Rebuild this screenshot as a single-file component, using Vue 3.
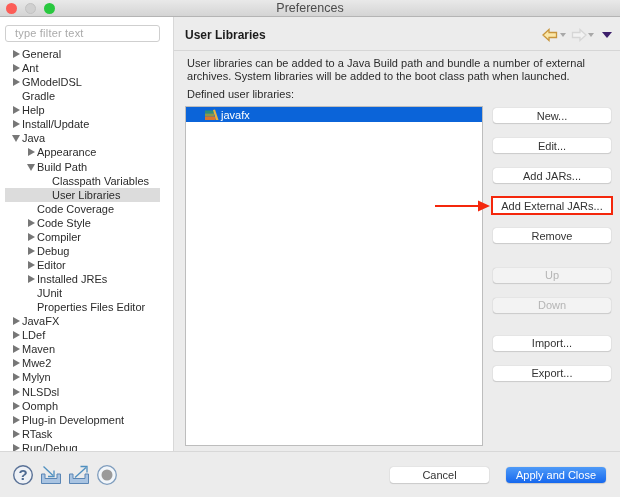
<template>
  <div class="window">
    <div class="titlebar">
      <span class="light red"></span>
      <span class="light grey"></span>
      <span class="light green"></span>
      <span class="title">Preferences</span>
    </div>

    <div class="body">
      <aside class="sidebar">
        <div class="filter">type filter text</div>
        <div class="tree">
          <div
            v-for="node in tree"
            :key="node.label"
            class="node"
            :class="['depth-' + node.depth, { current: node.current }]"
          >
            <span class="twist" :class="node.arrow"></span>
            <span>{{ node.label }}</span>
          </div>
        </div>
      </aside>

      <main class="panel">
        <header class="panel-head">
          <h1>User Libraries</h1>
          <div class="nav">
            <svg width="16" height="14" viewBox="0 0 16 14">
              <path d="M1 7 7 1.500V4.500h7.500v5H7v3z" fill="#fbe7a8" stroke="#c8953c" stroke-width="1.300" />
            </svg>
            <span class="mini"></span>
            <svg class="fwd" width="16" height="14" viewBox="0 0 16 14">
              <path d="M15 7 9 1.500V4.500H1.500v5H9v3z" fill="#f2f2f2" stroke="#d6d6d6" stroke-width="1.300" />
            </svg>
            <span class="mini second"></span>
            <span class="menu"></span>
          </div>
        </header>

        <div class="content">
          <p class="intro">User libraries can be added to a Java Build path and bundle a number of external archives. System libraries will be added to the boot class path when launched.</p>
          <p class="defined">Defined user libraries:</p>
          <div class="columns">
            <div class="list">
              <div class="lib">
                <svg width="16" height="12" viewBox="0 0 16 12">
                  <rect x="1" y="1.500" width="9" height="3" fill="#2f8f78" />
                  <rect x="1" y="4.500" width="9" height="3" fill="#8a9a4a" />
                  <rect x="1" y="7.500" width="10.500" height="3.500" fill="#d9772e" />
                  <path d="M9 1 11 .5 14.500 11H12z" fill="#e9b23c" />
                </svg>
                <span>javafx</span>
              </div>
            </div>
            <div class="buttons">
              <button v-for="b in buttons" :key="b.label" class="btn" :class="b.cls" :disabled="b.off">
                {{ b.label }}
              </button>
              <div class="callout">
                <svg width="56" height="14" viewBox="0 0 56 14">
                  <path d="M0 7h44" stroke="#f4270c" stroke-width="1.800" />
                  <path d="M43 1.500 55 7 43 12.500z" fill="#f4270c" />
                </svg>
              </div>
            </div>
          </div>
        </div>
      </main>
    </div>

    <footer class="footer">
      <div class="tools">
        <svg width="22" height="22" viewBox="0 0 22 22">
          <circle cx="11" cy="11" r="9.300" fill="#eef1f6" stroke="#5a7297" stroke-width="1.400" />
          <text x="11" y="16" text-anchor="middle" class="q">?</text>
        </svg>
        <svg width="22" height="20" viewBox="0 0 22 20">
          <path d="M1.500 9h3.500v4.500h12V9h3.500v9.500h-19z" fill="#a9c4e2" stroke="#5b86b5" />
          <path d="M3.500 1.500 13 10.500" stroke="#4f8fbf" stroke-width="1.300" fill="none" />
          <path d="M14 5.500v6H8" stroke="#4f8fbf" stroke-width="1.300" fill="none" />
        </svg>
        <svg width="22" height="20" viewBox="0 0 22 20">
          <path d="M1.500 9h3.500v4.500h12V9h3.500v9.500h-19z" fill="#a9c4e2" stroke="#5b86b5" />
          <path d="M7 12.500 18 2.500" stroke="#4f8fbf" stroke-width="1.300" fill="none" />
          <path d="M12.500 1.500h6.500v6" stroke="#4f8fbf" stroke-width="1.300" fill="none" />
        </svg>
        <svg width="22" height="22" viewBox="0 0 22 22">
          <circle cx="11" cy="11" r="9.300" fill="#f2f6fa" stroke="#7f9dbd" stroke-width="1.300" />
          <circle cx="11" cy="11" r="5.500" fill="#9a9a9a" />
        </svg>
      </div>
      <div class="actions">
        <button class="btn cancel">Cancel</button>
        <button class="btn apply">Apply and Close</button>
      </div>
    </footer>
  </div>
</template>

<script setup>
// depth, label, arrow
const raw = [
  [0, 'General', 'closed'],
  [0, 'Ant', 'closed'],
  [0, 'GModelDSL', 'closed'],
  [0, 'Gradle', ''],
  [0, 'Help', 'closed'],
  [0, 'Install/Update', 'closed'],
  [0, 'Java', 'open'],
  [1, 'Appearance', 'closed'],
  [1, 'Build Path', 'open'],
  [2, 'Classpath Variables', ''],
  [2, 'User Libraries', ''],
  [1, 'Code Coverage', ''],
  [1, 'Code Style', 'closed'],
  [1, 'Compiler', 'closed'],
  [1, 'Debug', 'closed'],
  [1, 'Editor', 'closed'],
  [1, 'Installed JREs', 'closed'],
  [1, 'JUnit', ''],
  [1, 'Properties Files Editor', ''],
  [0, 'JavaFX', 'closed'],
  [0, 'LDef', 'closed'],
  [0, 'Maven', 'closed'],
  [0, 'Mwe2', 'closed'],
  [0, 'Mylyn', 'closed'],
  [0, 'NLSDsl', 'closed'],
  [0, 'Oomph', 'closed'],
  [0, 'Plug-in Development', 'closed'],
  [0, 'RTask', 'closed'],
  [0, 'Run/Debug', 'closed'],
]

const tree = raw.map(([depth, label, arrow]) => ({
  depth,
  label,
  arrow,
  current: label === 'User Libraries',
}))

const buttons = [
  { label: 'New...' },
  { label: 'Edit...' },
  { label: 'Add JARs...' },
  { label: 'Add External JARs...', cls: 'marked' },
  { label: 'Remove' },
  { label: 'Up', off: true, cls: 'gap-up' },
  { label: 'Down', off: true },
  { label: 'Import...', cls: 'gap-import' },
  { label: 'Export...' },
]
</script>

<style>
html,
body {
  margin: 0;
  overflow: hidden;
  background: #ececec;
}
</style>

<style scoped>
.window {
  width: 620px;
  height: 497px;
  display: flex;
  flex-direction: column;
  font-family: "Liberation Sans", Arial, sans-serif;
  font-size: 11px;
  color: #2b2b2b;
  background: #ececec;
  overflow: hidden;
  filter: blur(0.4px);
}

.titlebar {
  height: 16px;
  flex: none;
  display: flex;
  align-items: center;
  gap: 8px;
  padding-left: 5.5px;
  position: relative;
  background: linear-gradient(#e9e9e9, #d4d4d4);
  border-bottom: 1px solid #b4b4b4;
}

.light {
  width: 11px;
  height: 11px;
  border-radius: 50%;
}

.red { background: #fc5d57; }
.grey { background: #d0d0d0; border: 1px solid #c2c2c2; box-sizing: border-box; }
.green { background: #29c83f; }

.title {
  position: absolute;
  left: 0;
  right: 0;
  text-align: center;
  font-size: 12.5px;
  color: #4c4c4c;
}

.body {
  flex: 1;
  min-height: 0;
  display: flex;
}

.sidebar {
  width: 173px;
  flex: none;
  background: #fff;
  border-right: 1px solid #d8d8d8;
  overflow: hidden;
}

.filter {
  width: 155px;
  height: 17px;
  box-sizing: border-box;
  margin: 8px 0 0 5px;
  padding-left: 9px;
  line-height: 15px;
  border: 1px solid #cfcfcf;
  border-radius: 3px;
  color: #aaa;
  letter-spacing: 0.2px;
}

.tree {
  margin-top: 5px;
}

.node {
  height: 14.07px;
  line-height: 14px;
  width: 155px;
  box-sizing: border-box;
  margin-left: 5px;
  display: flex;
  align-items: center;
  white-space: nowrap;
}

.node.depth-0 { padding-left: 7px; }
.node.depth-1 { padding-left: 22px; }
.node.depth-2 { padding-left: 22px; }
.node.depth-2 .twist { width: 25px; }

.current {
  background: #dcdcdc;
}

.twist {
  width: 10px;
  height: 10px;
  flex: none;
  position: relative;
}

.twist.closed::before {
  content: "";
  position: absolute;
  left: 0.5px;
  top: 1px;
  border-left: 7.5px solid #777;
  border-top: 4px solid transparent;
  border-bottom: 4px solid transparent;
}

.twist.open::before {
  content: "";
  position: absolute;
  left: 0;
  top: 2px;
  border-top: 7.5px solid #777;
  border-left: 4px solid transparent;
  border-right: 4px solid transparent;
}

.panel {
  flex: 1;
  min-width: 0;
  display: flex;
  flex-direction: column;
}

.panel-head {
  height: 31px;
  flex: none;
  display: flex;
  align-items: center;
  justify-content: space-between;
  padding: 2px 8px 0 11px;
  border-bottom: 1px solid #d6d6d6;
}

h1 {
  margin: 0;
  font-size: 12px;
  font-weight: bold;
  color: #1c1c1c;
}

.nav {
  display: flex;
  align-items: center;
}

.nav .fwd {
  margin-left: 5px;
}

.mini {
  margin-left: 2px;
  border-top: 4px solid #a8a8a8;
  border-left: 3px solid transparent;
  border-right: 3px solid transparent;
}

.mini.second {
  margin-left: 1px;
}

.menu {
  margin-left: 8px;
  border-top: 6px solid #3d1f6b;
  border-left: 5px solid transparent;
  border-right: 5px solid transparent;
}

.content {
  flex: 1;
  min-height: 0;
  padding: 6px 8px 0 13px;
}

.intro {
  margin: 0;
  line-height: 13px;
  width: 425px;
  letter-spacing: 0.03px;
}

.defined {
  margin: 5px 0 5px;
  line-height: 13px;
}

.columns {
  display: flex;
  margin-left: -2px;
}

.list {
  width: 298px;
  height: 340px;
  box-sizing: border-box;
  background: #fff;
  border: 1px solid #bdbdbd;
  flex: none;
}

.lib {
  height: 15px;
  background: #0b64d9;
  color: #fff;
  display: flex;
  align-items: center;
  gap: 1px;
  padding-left: 18px;
}

.buttons {
  margin-left: 10px;
  padding-top: 2px;
  display: flex;
  flex-direction: column;
  gap: 15px;
  position: relative;
}

.btn {
  font: inherit;
  height: 15px;
  padding: 0;
  border: none;
  border-radius: 3px;
  background: #fff;
  color: #333;
  box-shadow: 0 0 1px rgba(0, 0, 0, 0.3), 0 1px 1px rgba(0, 0, 0, 0.12);
}

.buttons .btn {
  width: 118px;
}

.btn:disabled {
  background: #f3f3f3;
  color: #b5b5b5;
}

.gap-up {
  margin-top: 9.5px;
}

.gap-import {
  margin-top: 8px;
}

.marked {
  outline: 2px solid #f4270c;
  outline-offset: 0;
  border-radius: 0;
  box-shadow: none;
}

.callout {
  position: absolute;
  left: -58px;
  top: 93px;
  line-height: 0;
}

.footer {
  height: 45px;
  flex: none;
  border-top: 1px solid #d8d8d8;
  display: flex;
  align-items: center;
  justify-content: space-between;
  padding: 0 14px 0 12px;
}

.tools {
  display: flex;
  align-items: center;
  gap: 6px;
}

.q {
  font-family: "Liberation Sans", Arial, sans-serif;
  font-size: 15px;
  font-weight: bold;
  fill: #4d6a92;
}

.actions {
  display: flex;
  gap: 17px;
}

.actions .btn {
  width: 99px;
  height: 16px;
}

.apply {
  background: linear-gradient(#4f9bf8, #1668ee);
  border-radius: 4px;
  color: #fff;
}

.actions .apply {
  width: 100px;
}
</style>
